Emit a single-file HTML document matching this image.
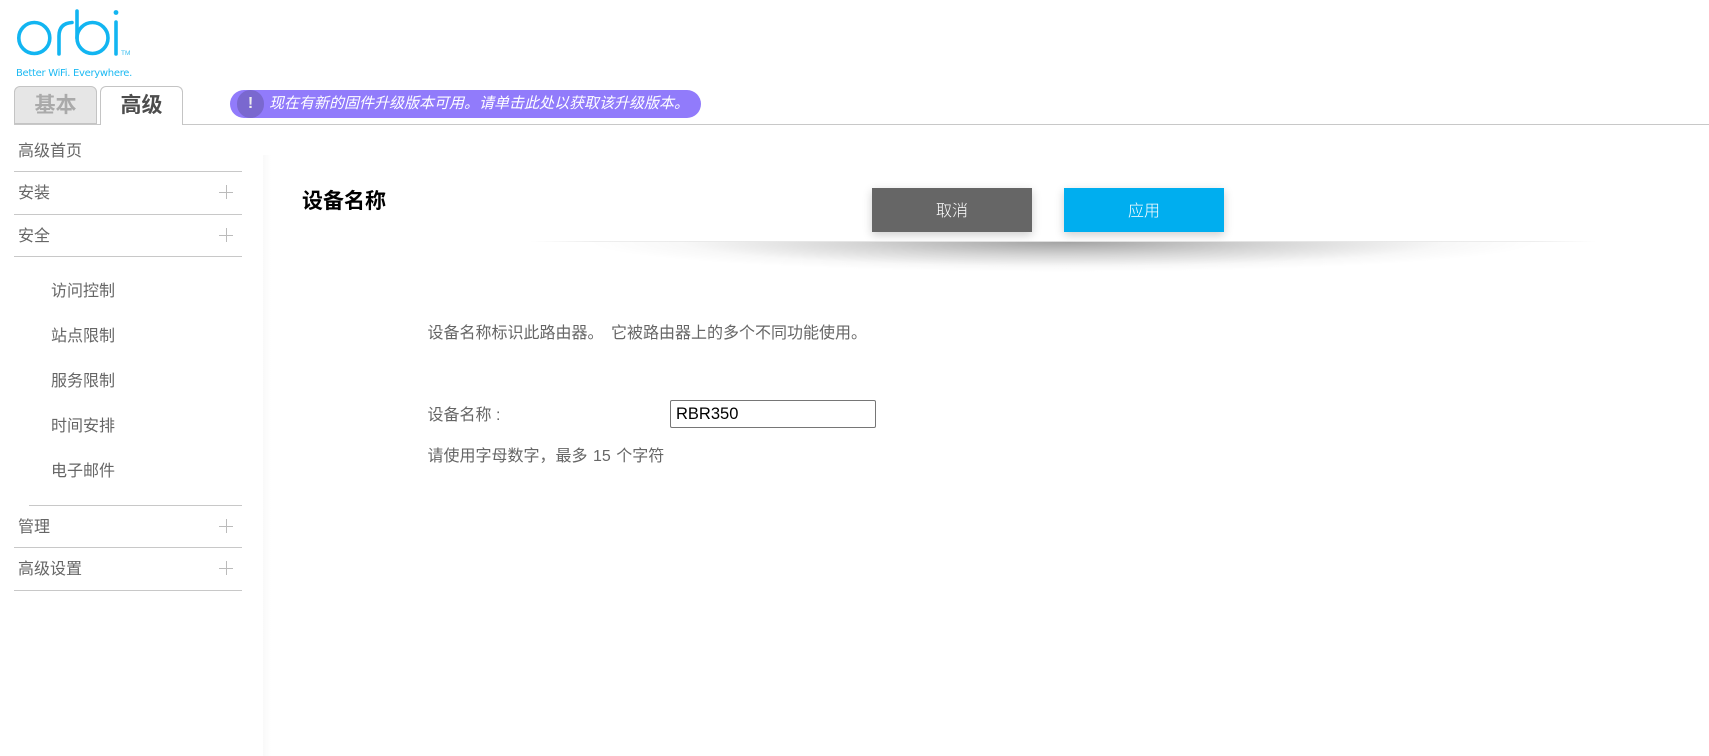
<!DOCTYPE html>
<html lang="zh">
<head>
<meta charset="utf-8">
<title>设备名称</title>
<style>
html,body{margin:0;padding:0;background:#fff}
body{width:1709px;height:756px;position:relative;overflow:hidden;font-family:"Liberation Sans","Noto Sans CJK SC",sans-serif;color:#666;font-size:16px}
.a{position:absolute;white-space:nowrap}
.t{line-height:22px;margin-top:1px}
.line{position:absolute;height:1px;background:#c8c8c8}
.tab{position:absolute;top:86px;width:83px;height:38px;box-sizing:border-box;border:1px solid #c4c4c4;border-radius:6px 6px 0 0;text-align:center;font-size:21px;font-weight:bold;line-height:37px}
.plus{position:absolute;width:14px;height:14px;background:linear-gradient(#bbb,#bbb) 0 6.5px/14px 1.4px no-repeat,linear-gradient(#bbb,#bbb) 6.5px 0/1.4px 14px no-repeat}
.btn{position:absolute;top:188px;width:160px;height:44px;color:#fff;text-align:center;line-height:47px;font-weight:300;box-shadow:0 3px 9px rgba(0,0,0,.2)}
</style>
</head>
<body>
<svg class="a" style="left:0;top:0" width="140" height="70" viewBox="0 0 140 70">
<g fill="none" stroke="#12b5f1" stroke-width="3.6" stroke-linecap="round">
<circle cx="34.3" cy="38" r="15.5"/>
<path d="M59 54V36C59 27 64 23 72 22.5"/>
<path d="M77 11V38"/>
<circle cx="92.5" cy="38" r="15.5"/>
<path d="M116 22V54"/>
</g>
<circle cx="116" cy="12.5" r="2.4" fill="#12b5f1"/>
<text x="121" y="55" font-family="Liberation Sans" font-size="6.5" fill="#35bdf0">TM</text>
</svg>
<div class="a" style="left:16px;top:67px;font-size:10px;line-height:14px;color:#1cb9f2;font-family:'DejaVu Sans',sans-serif;letter-spacing:-.3px">Better WiFi. Everywhere.</div>

<div class="line" style="left:14px;top:124px;width:1695px"></div>
<div class="tab" style="left:14px;background:#e6e6e6;color:#aaa">基本</div>
<div class="tab" style="left:100px;background:#fff;color:#4d4d4d;height:39px;border-bottom:0;z-index:2">高级</div>

<div class="a" style="left:230px;top:90px;width:471px;height:28px;border-radius:14px;background:#917bfb"></div>
<div class="a" style="left:237px;top:90px;width:27px;height:28px;border-radius:14px;background:#7a68cf;color:#eee;font-weight:bold;font-size:16px;text-align:center;line-height:27px">!</div>
<div class="a" style="left:269px;top:90px;height:28px;line-height:28px;color:#fff;font-style:italic;font-size:15px">现在有新的固件升级版本可用。请单击此处以获取该升级版本。</div>

<div class="a t" style="left:18px;top:140px">高级首页</div>
<div class="line" style="left:14px;top:171px;width:228px"></div>
<div class="a t" style="left:18px;top:182px">安装</div><div class="plus" style="left:219px;top:185px"></div>
<div class="line" style="left:14px;top:214px;width:228px"></div>
<div class="a t" style="left:18px;top:225px">安全</div><div class="plus" style="left:219px;top:228px"></div>
<div class="line" style="left:14px;top:256px;width:228px"></div>
<div class="a t" style="left:51px;top:280px">访问控制</div>
<div class="a t" style="left:51px;top:325px">站点限制</div>
<div class="a t" style="left:51px;top:370px">服务限制</div>
<div class="a t" style="left:51px;top:415px">时间安排</div>
<div class="a t" style="left:51px;top:460px">电子邮件</div>
<div class="line" style="left:29px;top:505px;width:213px"></div>
<div class="a t" style="left:18px;top:516px">管理</div><div class="plus" style="left:219px;top:519px"></div>
<div class="line" style="left:14px;top:547px;width:228px"></div>
<div class="a t" style="left:18px;top:558px">高级设置</div><div class="plus" style="left:219px;top:561px"></div>
<div class="line" style="left:14px;top:590px;width:228px"></div>

<div class="a" style="left:263px;top:155px;width:8px;height:601px;background:linear-gradient(90deg,#f9f9f9,#fff)"></div>

<div class="a" style="left:302px;top:188px;font-size:21px;font-weight:bold;line-height:28px;color:#000">设备名称</div>
<div class="btn" style="left:872px;background:#666">取消</div>
<div class="btn" style="left:1064px;background:#00aeef">应用</div>

<div class="a" style="left:530px;top:241px;width:1067px;height:1px;background:linear-gradient(90deg,#fff,#eee 6%,#ddd 50%,#eee 94%,#fff)"></div>
<svg class="a" style="left:530px;top:242px" width="1067" height="30" viewBox="0 0 1067 30">
<defs><radialGradient id="s" cx="50%" cy="50%" r="50%">
<stop offset="0" stop-color="#000" stop-opacity=".36"/>
<stop offset=".45" stop-color="#000" stop-opacity=".16"/>
<stop offset=".8" stop-color="#000" stop-opacity=".03"/>
<stop offset="1" stop-color="#000" stop-opacity="0"/>
</radialGradient></defs>
<ellipse cx="533" cy="0" rx="475" ry="30" fill="url(#s)"/>
</svg>

<div class="a t" style="left:427.5px;top:322px;word-spacing:3px">设备名称标识此路由器。 它被路由器上的多个不同功能使用。</div>
<div class="a t" style="left:427.5px;top:404px">设备名称 :</div>
<div class="a" style="left:670px;top:400px;width:206px;height:28px;box-sizing:border-box;border:1px solid #767676;border-radius:2px;background:#fff;color:#000;padding-left:5px;line-height:26px;font-size:16.5px">RBR350</div>
<div class="a t" style="left:427.5px;top:445px;word-spacing:1px">请使用字母数字，最多 15 个字符</div>
</body>
</html>
